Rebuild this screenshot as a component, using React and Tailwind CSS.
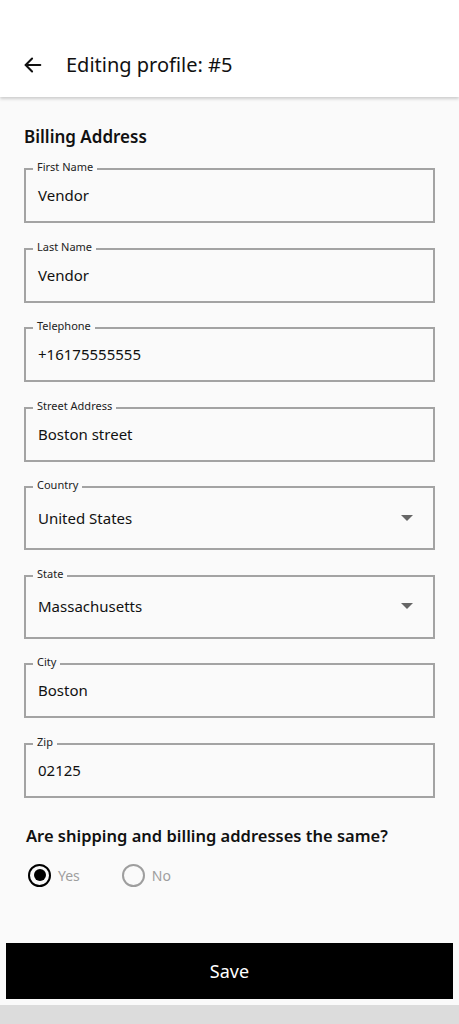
import React from "react";

function Field({ label, value, select = false }) {
  return (
    <div className="relative">
      <div
        className={`border-2 border-[#a3a3a3] flex items-center justify-between pl-[12px] pr-[20px] ${select ? "h-[64px]" : "h-[55px]"}`}
      >
        <span className="text-[15px] text-[#111]">{value}</span>
        {select && (
          <svg width="12" height="7" viewBox="0 0 12 7">
            <path d="M0 0 L12 0 L6 6 Z" fill="#666" />
          </svg>
        )}
      </div>
      <span className="absolute left-[9px] top-[-9px] px-[4px] bg-[#fafafa] text-[11px] leading-[16px] text-[#222]">
        {label}
      </span>
    </div>
  );
}

export default function App() {
  return (
    <div
      className="w-[459px] h-[1024px] bg-[#fafafa] flex flex-col overflow-hidden"
      style={{ fontFamily: '"Noto Sans", sans-serif' }}
    >
      <div className="h-[97px] bg-white shadow-[0_2px_3px_rgba(0,0,0,0.18)] flex items-center pt-[33px] pl-[22px] relative z-10">
        <svg width="22" height="22" viewBox="0 0 24 24" fill="none" stroke="#111" strokeWidth="2.2" strokeLinecap="round" strokeLinejoin="round">
          <path d="M20 12H4" />
          <path d="M11 5l-7 7 7 7" />
        </svg>
        <span className="ml-[22px] text-[20px] text-[#111]">Editing profile: #5</span>
      </div>
      <div className="flex-1 flex flex-col px-[24px] pt-[28px]">
        <div className="text-[17px] font-semibold text-[#111] leading-[24px]">Billing Address</div>
        <div className="flex flex-col gap-[24.5px] mt-[19px]">
          <Field label="First Name" value="Vendor" />
          <Field label="Last Name" value="Vendor" />
          <Field label="Telephone" value="+16175555555" />
          <Field label="Street Address" value="Boston street" />
          <Field label="Country" value="United States" select />
          <Field label="State" value="Massachusetts" select />
          <Field label="City" value="Boston" />
          <Field label="Zip" value="02125" />
        </div>
        <div className="mt-[26px] pl-[2px] text-[16.5px] font-semibold text-[#111] leading-[24px]">
          Are shipping and billing addresses the same?
        </div>
        <div className="flex items-center mt-[16px] pl-[4px]">
          <div className="flex items-center">
            <div className="w-[23px] h-[23px] rounded-full border-[2.5px] border-black flex items-center justify-center">
              <div className="w-[12px] h-[12px] rounded-full bg-black" />
            </div>
            <span className="ml-[7px] text-[14px] text-[#9e9e9e]">Yes</span>
          </div>
          <div className="flex items-center ml-[42px]">
            <div className="w-[23px] h-[23px] rounded-full border-[2.5px] border-[#9e9e9e]" />
            <span className="ml-[7px] text-[14px] text-[#9e9e9e]">No</span>
          </div>
        </div>
      </div>
      <div className="px-[6px]">
        <button className="w-full h-[56px] bg-black text-white text-[18px] flex items-center justify-center">
          Save
        </button>
      </div>
      <div className="h-[6px]" />
      <div className="h-[19px] bg-[#dcdcdc]" />
    </div>
  );
}
